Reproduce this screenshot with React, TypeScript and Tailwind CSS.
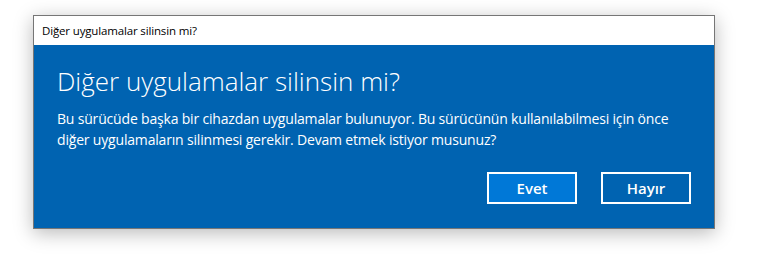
export default function App() {
  return (
    <div className="h-[278px] w-[762px] bg-white pt-[15px] pl-[33px] font-['Open_Sans',sans-serif]">
      <div className="flex h-[214px] w-[682px] flex-col border border-[#767676] shadow-[0_4px_18px_rgba(0,0,0,0.28)]">
        <div className="flex h-[29px] items-center bg-white pl-[8px] text-[11.5px] tracking-[-0.15px] text-black">
          Diğer uygulamalar silinsin mi?
        </div>
        <div className="flex flex-1 flex-col bg-[#0063b1] px-[23px] text-white">
          <h1 className="mt-[19px] text-[26px] leading-[34px] font-light">Diğer uygulamalar silinsin mi?</h1>
          <p className="mt-[10px] text-[14px] leading-[21px] tracking-[-0.18px] whitespace-nowrap">
            Bu sürücüde başka bir cihazdan uygulamalar bulunuyor. Bu sürücünün kullanılabilmesi için önce
            <br />
            diğer uygulamaların silinmesi gerekir. Devam etmek istiyor musunuz?
          </p>
          <div className="mt-[22px] flex justify-end gap-[24px]">
            <button className="h-[32px] w-[90px] border-2 border-white bg-[#0078d7] text-[15px] font-semibold">
              Evet
            </button>
            <button className="h-[32px] w-[90px] border-2 border-white bg-[#0063b1] text-[15px] font-semibold">
              Hayır
            </button>
          </div>
        </div>
      </div>
    </div>
  );
}
